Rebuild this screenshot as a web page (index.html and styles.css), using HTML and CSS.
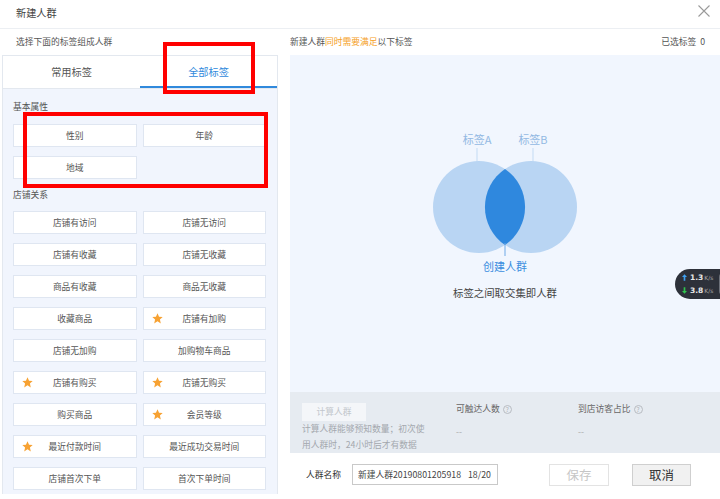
FILE: index.html
```html
<!DOCTYPE html>
<html lang="zh-CN">
<head>
<meta charset="utf-8">
<link rel="stylesheet" href="styles.css">
</head>
<body>
<div class="dialog">
  <header class="dlg-head">
    <span class="dlg-title">新建人群</span>
    <svg class="close" width="12" height="12" viewBox="0 0 12 12"><path d="M0.5 0.5L11.5 11.5M11.5 0.5L0.5 11.5"/></svg>
  </header>
  <div class="sub">
    <div class="sub-left">选择下面的标签组成人群</div>
    <div class="sub-right">
      <span>新建人群<em>同时需要满足</em>以下标签</span>
      <span>已选标签&nbsp;&nbsp;0</span>
    </div>
  </div>
  <div class="main">
    <section class="tags">
      <div class="tabs">
        <div class="tab">常用标签</div>
        <div class="tab active">全部标签</div>
      </div>
      <div class="tag-body">
        <div class="group-title">基本属性</div>
        <div class="grid">
          <div class="tag">性别</div>
          <div class="tag">年龄</div>
          <div class="tag">地域</div>
        </div>
        <div class="group-title second">店铺关系</div>
        <div class="grid">
          <div class="tag">店铺有访问</div>
          <div class="tag">店铺无访问</div>
          <div class="tag">店铺有收藏</div>
          <div class="tag">店铺无收藏</div>
          <div class="tag">商品有收藏</div>
          <div class="tag">商品无收藏</div>
          <div class="tag">收藏商品</div>
          <div class="tag"><svg class="star" viewBox="0 0 10 10"><path d="M5 0.3L6.4 3.3L9.7 3.6L7.2 5.9L8 9.5L5 7.6L2 9.5L2.8 5.9L0.3 3.6L3.6 3.3Z"/></svg>店铺有加购</div>
          <div class="tag">店铺无加购</div>
          <div class="tag">加购物车商品</div>
          <div class="tag"><svg class="star" viewBox="0 0 10 10"><path d="M5 0.3L6.4 3.3L9.7 3.6L7.2 5.9L8 9.5L5 7.6L2 9.5L2.8 5.9L0.3 3.6L3.6 3.3Z"/></svg>店铺有购买</div>
          <div class="tag"><svg class="star" viewBox="0 0 10 10"><path d="M5 0.3L6.4 3.3L9.7 3.6L7.2 5.9L8 9.5L5 7.6L2 9.5L2.8 5.9L0.3 3.6L3.6 3.3Z"/></svg>店铺无购买</div>
          <div class="tag">购买商品</div>
          <div class="tag"><svg class="star" viewBox="0 0 10 10"><path d="M5 0.3L6.4 3.3L9.7 3.6L7.2 5.9L8 9.5L5 7.6L2 9.5L2.8 5.9L0.3 3.6L3.6 3.3Z"/></svg>会员等级</div>
          <div class="tag"><svg class="star" viewBox="0 0 10 10"><path d="M5 0.3L6.4 3.3L9.7 3.6L7.2 5.9L8 9.5L5 7.6L2 9.5L2.8 5.9L0.3 3.6L3.6 3.3Z"/></svg>最近付款时间</div>
          <div class="tag">最近成功交易时间</div>
          <div class="tag">店铺首次下单</div>
          <div class="tag">首次下单时间</div>
        </div>
      </div>
    </section>
    <section class="right">
      <div class="venn">
        <svg class="venn-svg" width="160" height="172" viewBox="0 0 160 172">
          <line class="lbl-line" x1="52" y1="18" x2="52" y2="32"/>
          <line class="lbl-line" x1="108" y1="18" x2="108" y2="32"/>
          <circle cx="54" cy="77" r="46" class="c-light"/>
          <circle cx="106" cy="77" r="46" class="c-light"/>
          <path class="c-dark" d="M80 39 A46 46 0 0 1 80 115 A46 46 0 0 1 80 39Z"/>
          <line class="mid-line" x1="80" y1="113" x2="80" y2="126"/>
          <text class="t-lbl" x="52" y="14">标签A</text>
          <text class="t-lbl" x="108" y="14">标签B</text>
          <text class="t-create" x="80" y="141">创建人群</text>
          <text class="t-desc" x="80" y="167">标签之间取交集即人群</text>
        </svg>
      </div>
      <div class="calc">
        <div class="calc-col1">
          <div class="calc-btn">计算人群</div>
          <div class="calc-tip">计算人群能够预知数量；初次使<br>用人群时，24小时后才有数据</div>
        </div>
        <div class="calc-col2">
          <div class="col-title">可触达人数<span class="q">?</span></div>
          <div class="col-val">--</div>
        </div>
        <div class="calc-col3">
          <div class="col-title">到店访客占比<span class="q">?</span></div>
          <div class="col-val">--</div>
        </div>
      </div>
      <div class="name-row">
        <span class="name-label">人群名称</span>
        <div class="name-input"><span>新建人群20190801205918</span><span class="count">18/20</span></div>
        <div class="btn btn-save">保存</div>
        <div class="btn btn-cancel">取消</div>
      </div>
    </section>
  </div>
</div>
<div class="speed">
  <div class="sp-rows">
    <div class="sp-row"><svg class="arr" viewBox="0 0 6 8"><path d="M3 0L6 3.5H4V8H2V3.5H0Z" fill="#3fa1f2"/></svg><b>1.3</b><small>K/s</small></div>
    <div class="sp-row"><svg class="arr" viewBox="0 0 6 8"><path d="M3 8L6 4.5H4V0H2V4.5H0Z" fill="#2fc44d"/></svg><b>3.8</b><small>K/s</small></div>
  </div>
  <div class="sp-knob"></div>
</div>
<div class="mark mark-tab"></div>
<div class="mark mark-basic"></div>
</body>
</html>
```
FILE: styles.css
```css
* { box-sizing: border-box; margin: 0; padding: 0; }
html, body { width: 720px; height: 499px; overflow: hidden; background: #fff; }
body {
  font-family: "Noto Sans CJK SC", "Noto Sans", sans-serif;
  font-size: 8.75px;
  color: #555;
  position: relative;
}
.dialog { width: 720px; height: 499px; display: flex; flex-direction: column; }

.dlg-head {
  height: 29px;
  flex: none;
  border-bottom: 1px solid #eceff3;
  display: flex;
  justify-content: space-between;
  align-items: flex-start;
  padding: 0 10px 0 16px;
}
.dlg-title { font-size: 10.2px; line-height: 14px; margin-top: 6px; color: #444; }
.close { margin-top: 5px; }
.close path { stroke: #9a9a9a; stroke-width: 1.1; fill: none; }

.sub { height: 26px; flex: none; display: flex; align-items: center; line-height: 14px; color: #555; }
.sub-left { width: 290px; padding-left: 16px; }
.sub-right { flex: 1; display: flex; justify-content: space-between; padding-right: 15px; }
.sub-right em { font-style: normal; color: #f5a026; }

.main { flex: 1; display: flex; align-items: flex-start; }

.tags {
  margin-left: 2px;
  width: 276px;
  height: 439px;
  border: 1px solid #e3e8ef;
  display: flex;
  flex-direction: column;
}
.tabs { height: 33px; flex: none; display: flex; border-bottom: 1px solid #e3e8ef; background: #fff; }
.tab { flex: 1; text-align: center; line-height: 32px; font-size: 10.2px; color: #555; }
.tab.active { color: #3089dc; box-shadow: inset 0 -2px 0 #3089dc; }

.tag-body { flex: 1; background: #f1f5fd; padding: 11px 11px 4px 10px; }
.group-title { line-height: 14px; margin-bottom: 10px; color: #555; }
.group-title.second { margin-top: 9px; margin-bottom: 9px; }
.grid { display: grid; grid-template-columns: 1fr 1fr; column-gap: 6px; row-gap: 9px; }
.tag {
  position: relative;
  height: 23px;
  background: #fff;
  border: 1px solid #dfe6f1;
  display: flex;
  align-items: center;
  justify-content: center;
  color: #555;
  line-height: 12px;
}
.star { position: absolute; left: 8px; top: 5px; width: 11px; height: 11px; }
.star path { fill: #f7a233; }

.right { margin-left: 12px; flex: 1; height: 444px; display: flex; flex-direction: column; }
.venn { height: 337px; flex: none; background: #f1f6fe; display: flex; justify-content: center; padding-top: 75px; }
.venn-svg { display: block; }
.c-light { fill: #b9d5f3; }
.c-dark { fill: #2f88de; }
.lbl-line { stroke: #c3dbf4; stroke-width: 1; }
.mid-line { stroke: #6fa9e6; stroke-width: 1; }
.venn-svg text { font-family: "Noto Sans CJK SC", "Noto Sans", sans-serif; text-anchor: middle; }
.t-lbl { font-size: 11px; fill: #93b9e3; }
.t-create { font-size: 11px; fill: #3a8ddf; }
.t-desc { font-size: 10.4px; fill: #444; }

.calc { height: 61px; flex: none; background: #e6ebf1; display: flex; padding: 11px 0 0 12px; }
.calc-col1 { width: 154px; }
.calc-btn { width: 64px; height: 18px; line-height: 18px; text-align: center; background: #f4f6f9; color: #c2c6cc; }
.calc-tip { line-height: 16px; color: #a4a8ae; }
.calc-col2 { width: 122px; }
.col-title { line-height: 12px; color: #666; display: flex; align-items: center; }
.col-val { margin-top: 11px; line-height: 12px; color: #aaa; }
.q {
  display: inline-block;
  width: 9px;
  height: 9px;
  margin-left: 3px;
  border: 1px solid #b8bcc2;
  border-radius: 50%;
  font-size: 6.5px;
  line-height: 7px;
  text-align: center;
  color: #b0b4ba;
}

.name-row { flex: 1; display: flex; align-items: flex-start; padding: 11px 0 0 16px; }
.name-label { line-height: 21px; color: #333; }
.name-input {
  margin-left: 11px;
  width: 146px;
  height: 21px;
  border: 1px solid #c9c9c9;
  padding-left: 5px;
  line-height: 19px;
  color: #444;
  display: flex;
  background: #fff;
}
.count { margin-left: 7px; }
.btn { height: 22px; line-height: 20px; text-align: center; font-size: 12.5px; }
.btn-save { margin-left: 51px; width: 60px; border: 1px solid #e3e3e3; color: #c6c6c6; background: #fff; }
.btn-cancel { margin-left: 23px; width: 59px; border: 1px solid #cfcfcf; color: #333; background: #f1f1f1; }

.speed {
  position: absolute;
  left: 675px;
  top: 269px;
  width: 48px;
  height: 30px;
  background: #2d313a;
  border-radius: 15px 0 0 15px;
  display: flex;
  align-items: center;
  padding-left: 7px;
}
.sp-rows { flex: 1; }
.sp-row { display: flex; align-items: center; height: 13px; }
.arr { width: 5px; height: 7px; margin-right: 3px; }
.sp-row b { font-family: "DejaVu Sans", sans-serif; font-size: 7.5px; color: #e8e8e8; font-weight: bold; }
.sp-row small { font-family: "DejaVu Sans", sans-serif; font-size: 6px; color: #aaa; margin-left: 1px; }
.sp-knob { width: 4px; height: 22px; background: #6c7079; border-radius: 4px 0 0 4px; }

.mark { position: absolute; border: 4px solid #ff0000; }
.mark-tab { left: 163px; top: 42px; width: 92px; height: 52px; }
.mark-basic { left: 23px; top: 112px; width: 245px; height: 76px; }
```
